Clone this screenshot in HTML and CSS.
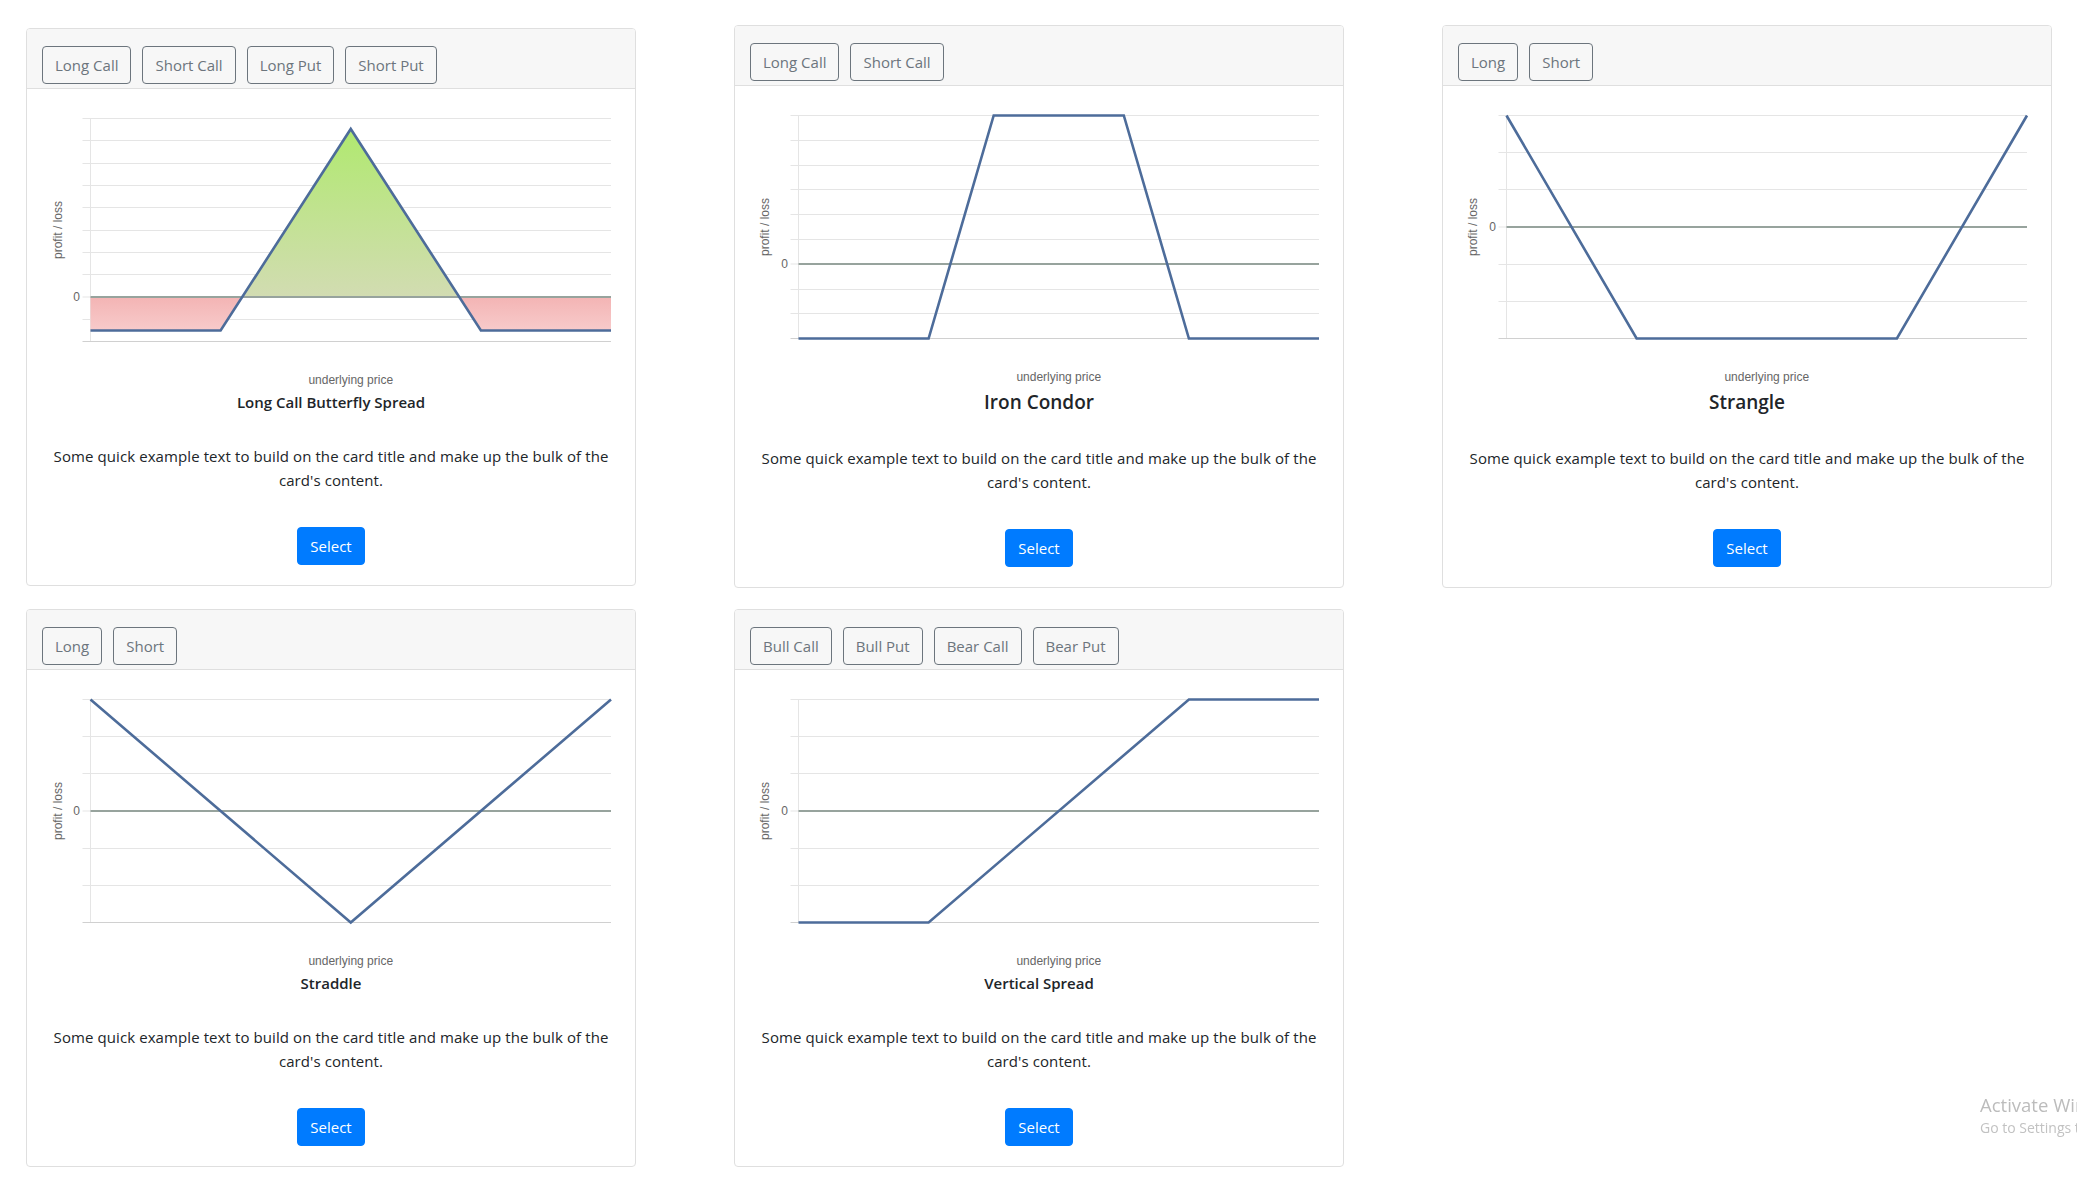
FILE: index.html
```html
<!DOCTYPE html>
<html lang="en">
<head>
<meta charset="utf-8">
<title>Option Strategies</title>
<link rel="stylesheet" href="styles.css">
</head>
<body>
<main class="page">

  <section class="card">
    <div class="card-header">
      <button class="opt">Long Call</button>
      <button class="opt">Short Call</button>
      <button class="opt">Long Put</button>
      <button class="opt">Short Put</button>
    </div>
    <div class="card-body">
      <svg class="chart" viewBox="0 0 568 284" width="568" height="284">
        <defs>
          <linearGradient id="gGreen" x1="0" y1="20" x2="0" y2="188" gradientUnits="userSpaceOnUse">
            <stop offset="0" stop-color="#b0e96f"/>
            <stop offset="1" stop-color="#d2dcb2"/>
          </linearGradient>
          <linearGradient id="gRed" x1="0" y1="188" x2="0" y2="222" gradientUnits="userSpaceOnUse">
            <stop offset="0" stop-color="#f3b4b4"/>
            <stop offset="1" stop-color="#f8cbcb"/>
          </linearGradient>
        </defs>
        <path class="grid" d="M35.5 9.5H564M35.5 31.5H564M35.5 54.5H564M35.5 76.5H564M35.5 98.5H564M35.5 121.5H564M35.5 143.5H564M35.5 165.5H564M35.5 188H43.5M35.5 210.5H564M43.5 9.5V232.5"/>
        <path class="base" d="M35.5 232.5H564"/>
        <polygon class="fill-red" points="43.5,188 195.3,188 173.6,221.5 43.5,221.5"/>
        <polygon class="fill-red" points="412.2,188 564,188 564,221.5 433.9,221.5"/>
        <polygon class="fill-green" points="195.3,188 303.75,20 412.2,188"/>
        <path class="zero" d="M43.5 188H564"/>
        <polyline class="pl" points="43.5,221.5 173.6,221.5 303.75,20 433.9,221.5 564,221.5"/>
        <text class="lbl" x="33" y="192" text-anchor="end">0</text>
        <text class="lbl" transform="translate(15 121) rotate(-90)" text-anchor="middle">profit / loss</text>
        <text class="lbl" x="303.75" y="275" text-anchor="middle">underlying price</text>
      </svg>
      <h5 class="title">Long Call Butterfly Spread</h5>
      <p class="text">Some quick example text to build on the card title and make up the bulk of the card's content.</p>
      <button class="select">Select</button>
    </div>
  </section>

  <section class="card">
    <div class="card-header">
      <button class="opt">Long Call</button>
      <button class="opt">Short Call</button>
    </div>
    <div class="card-body">
      <svg class="chart" viewBox="0 0 568 284" width="568" height="284">
        <path class="grid" d="M35.5 9.5H564M35.5 34.5H564M35.5 59.5H564M35.5 83.5H564M35.5 108.5H564M35.5 133.5H564M35.5 158H43.5M35.5 183.5H564M35.5 207.5H564M43.5 9.5V232.5"/>
        <path class="base" d="M35.5 232.5H564"/>
        <path class="zero" d="M43.5 158H564"/>
        <polyline class="pl" points="43.5,232.5 173.6,232.5 238.7,9.5 368.8,9.5 433.9,232.5 564,232.5"/>
        <text class="lbl" x="33" y="162" text-anchor="end">0</text>
        <text class="lbl" transform="translate(14 121) rotate(-90)" text-anchor="middle">profit / loss</text>
        <text class="lbl" x="303.75" y="275" text-anchor="middle">underlying price</text>
      </svg>
      <h5 class="title title-lg">Iron Condor</h5>
      <p class="text">Some quick example text to build on the card title and make up the bulk of the card's content.</p>
      <button class="select">Select</button>
    </div>
  </section>

  <section class="card">
    <div class="card-header">
      <button class="opt">Long</button>
      <button class="opt">Short</button>
    </div>
    <div class="card-body">
      <svg class="chart" viewBox="0 0 568 284" width="568" height="284">
        <path class="grid" d="M35.5 9.5H564M35.5 46.5H564M35.5 83.5H564M35.5 121H43.5M35.5 158.5H564M35.5 195.5H564M43.5 9.5V232.5"/>
        <path class="base" d="M35.5 232.5H564"/>
        <path class="zero" d="M43.5 121H564"/>
        <polyline class="pl" points="43.5,9.5 173.6,232.5 433.9,232.5 564,9.5"/>
        <text class="lbl" x="33" y="125" text-anchor="end">0</text>
        <text class="lbl" transform="translate(14 121) rotate(-90)" text-anchor="middle">profit / loss</text>
        <text class="lbl" x="303.75" y="275" text-anchor="middle">underlying price</text>
      </svg>
      <h5 class="title title-lg">Strangle</h5>
      <p class="text">Some quick example text to build on the card title and make up the bulk of the card's content.</p>
      <button class="select">Select</button>
    </div>
  </section>

  <section class="card">
    <div class="card-header">
      <button class="opt">Long</button>
      <button class="opt">Short</button>
    </div>
    <div class="card-body">
      <svg class="chart" viewBox="0 0 568 284" width="568" height="284">
        <path class="grid" d="M35.5 9.5H564M35.5 46.5H564M35.5 83.5H564M35.5 121H43.5M35.5 158.5H564M35.5 195.5H564M43.5 9.5V232.5"/>
        <path class="base" d="M35.5 232.5H564"/>
        <path class="zero" d="M43.5 121H564"/>
        <polyline class="pl" points="43.5,9.5 303.75,232.5 564,9.5"/>
        <text class="lbl" x="33" y="125" text-anchor="end">0</text>
        <text class="lbl" transform="translate(15 121) rotate(-90)" text-anchor="middle">profit / loss</text>
        <text class="lbl" x="303.75" y="275" text-anchor="middle">underlying price</text>
      </svg>
      <h5 class="title">Straddle</h5>
      <p class="text">Some quick example text to build on the card title and make up the bulk of the card's content.</p>
      <button class="select">Select</button>
    </div>
  </section>

  <section class="card">
    <div class="card-header">
      <button class="opt">Bull Call</button>
      <button class="opt">Bull Put</button>
      <button class="opt">Bear Call</button>
      <button class="opt">Bear Put</button>
    </div>
    <div class="card-body">
      <svg class="chart" viewBox="0 0 568 284" width="568" height="284">
        <path class="grid" d="M35.5 9.5H564M35.5 46.5H564M35.5 83.5H564M35.5 121H43.5M35.5 158.5H564M35.5 195.5H564M43.5 9.5V232.5"/>
        <path class="base" d="M35.5 232.5H564"/>
        <path class="zero" d="M43.5 121H564"/>
        <polyline class="pl" points="43.5,232.5 173.6,232.5 433.9,9.5 564,9.5"/>
        <text class="lbl" x="33" y="125" text-anchor="end">0</text>
        <text class="lbl" transform="translate(14 121) rotate(-90)" text-anchor="middle">profit / loss</text>
        <text class="lbl" x="303.75" y="275" text-anchor="middle">underlying price</text>
      </svg>
      <h5 class="title">Vertical Spread</h5>
      <p class="text">Some quick example text to build on the card title and make up the bulk of the card's content.</p>
      <button class="select">Select</button>
    </div>
  </section>

</main>

<div class="watermark">
  <div class="wm1">Activate Windows</div>
  <div class="wm2">Go to Settings to activate Windows.</div>
</div>
</body>
</html>
```

FILE: styles.css
```css
html, body {
  margin: 0;
  padding: 0;
  overflow: hidden;
  background: #ffffff;
}

body {
  font-family: "Open Sans", "Liberation Sans", sans-serif;
  font-size: 15px;
  line-height: 24px;
  color: #212529;
}

.page {
  display: grid;
  grid-template-columns: repeat(3, 610px);
  column-gap: 98px;
  row-gap: 21px;
  align-items: center;
  padding: 25px 25px 0 26px;
}

.card {
  border: 1px solid #dfdfdf;
  border-radius: 4px;
  background: #ffffff;
}

.card-header {
  display: flex;
  gap: 11px;
  padding: 17px 15px 4px;
  background: #f7f7f7;
  border-bottom: 1px solid #dfdfdf;
  border-radius: 3px 3px 0 0;
}

.opt {
  font-family: inherit;
  font-size: 15px;
  line-height: 24px;
  padding: 6px 12px;
  border: 1px solid #6c757d;
  border-radius: 4px;
  color: #6c757d;
  background: transparent;
  margin: 0;
}

.card-body {
  padding: 20px;
  text-align: center;
}

.chart {
  display: block;
  width: 568px;
  height: 284px;
}

.grid {
  fill: none;
  stroke: #e5e5e5;
  stroke-width: 1;
}

.base {
  fill: none;
  stroke: #d0d0d0;
  stroke-width: 1;
}

.zero {
  fill: none;
  stroke: #97a39d;
  stroke-width: 2;
}

.pl {
  fill: none;
  stroke: #4d6c9a;
  stroke-width: 2.6;
  stroke-linejoin: miter;
}

.fill-green {
  fill: url(#gGreen);
}

.fill-red {
  fill: url(#gRed);
}

.lbl {
  font-family: "Liberation Sans", Arial, sans-serif;
  font-size: 12px;
  fill: #666666;
}

.title {
  margin: 0 0 32px;
  font-size: 15px;
  line-height: 19px;
  font-weight: 600;
}

.title-lg {
  font-size: 19px;
  line-height: 24px;
  font-weight: 600;
}

.text {
  margin: 0 0 35px;
  letter-spacing: 0.09px;
}

.select {
  font-family: inherit;
  font-size: 15px;
  line-height: 24px;
  padding: 6px 12px;
  margin: 0;
  border: 1px solid #007bff;
  border-radius: 4px;
  background: #007bff;
  color: #ffffff;
}

.watermark {
  position: fixed;
  left: 1980px;
  top: 1091px;
  white-space: nowrap;
  color: #bcbcbc;
}

.wm1 {
  font-size: 18.5px;
  line-height: 28px;
}

.wm2 {
  font-size: 14px;
  line-height: 18px;
  color: #c2c2c2;
}
```
